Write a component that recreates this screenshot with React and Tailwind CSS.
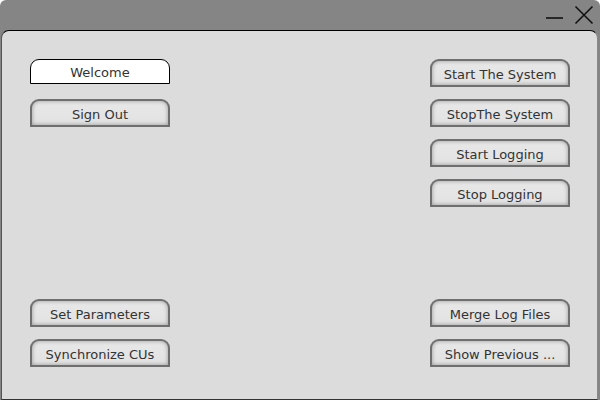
import React from 'react';

const font = { fontFamily: '"DejaVu Sans", "Liberation Sans", sans-serif' };

const Btn = ({ children }) => (
  <button
    className="w-[140px] h-[28px] pt-[4px] rounded-t-[9px] border-2 border-[#6f6f6f] bg-gradient-to-b from-[#e8e8e8] to-[#e2e2e2] text-[13px] text-[#333] shadow-[inset_0_0_4px_rgba(0,0,0,0.35)] flex items-center justify-center"
  >
    {children}
  </button>
);

const App = () => {
  return (
    <div className="w-[600px] h-[400px] bg-[#858585] rounded-t-[6px] flex flex-col" style={font}>
      <div className="h-[30px] flex items-center justify-end gap-[10px] pr-[6px] shrink-0">
        <svg width="18" height="18" viewBox="0 0 18 18" className="mt-[2px]">
          <line x1="0" y1="11" x2="17" y2="11" stroke="#111" strokeWidth="1.6" />
        </svg>
        <svg width="20" height="20" viewBox="0 0 20 20">
          <path d="M1.5 1.5 L18.5 18.5 M18.5 1.5 L1.5 18.5" stroke="#111" strokeWidth="1.6" fill="none" />
        </svg>
      </div>
      <div className="flex-1 ml-[1px] mr-[2px] bg-[#dcdcdc] border-t border-t-black border-l border-l-[#555] border-r border-r-[#888] border-b border-b-[#333] rounded-t-[8px] flex justify-between pl-[28px] pr-[27px] pt-[28px] pb-[32px]">
        <div className="flex flex-col justify-between">
          <div className="flex flex-col gap-[15px]">
            <div className="w-[140px] h-[25px] pt-[2px] rounded-t-[9px] border border-black bg-white text-[13px] text-[#333] flex items-center justify-center">
              Welcome
            </div>
            <Btn>Sign Out</Btn>
          </div>
          <div className="flex flex-col gap-[12px]">
            <Btn>Set Parameters</Btn>
            <Btn>Synchronize CUs</Btn>
          </div>
        </div>
        <div className="flex flex-col justify-between">
          <div className="flex flex-col gap-[12px]">
            <Btn>Start The System</Btn>
            <Btn>StopThe System</Btn>
            <Btn>Start Logging</Btn>
            <Btn>Stop Logging</Btn>
          </div>
          <div className="flex flex-col gap-[12px]">
            <Btn>Merge Log Files</Btn>
            <Btn>Show Previous ...</Btn>
          </div>
        </div>
      </div>
    </div>
  );
};

export default App;
